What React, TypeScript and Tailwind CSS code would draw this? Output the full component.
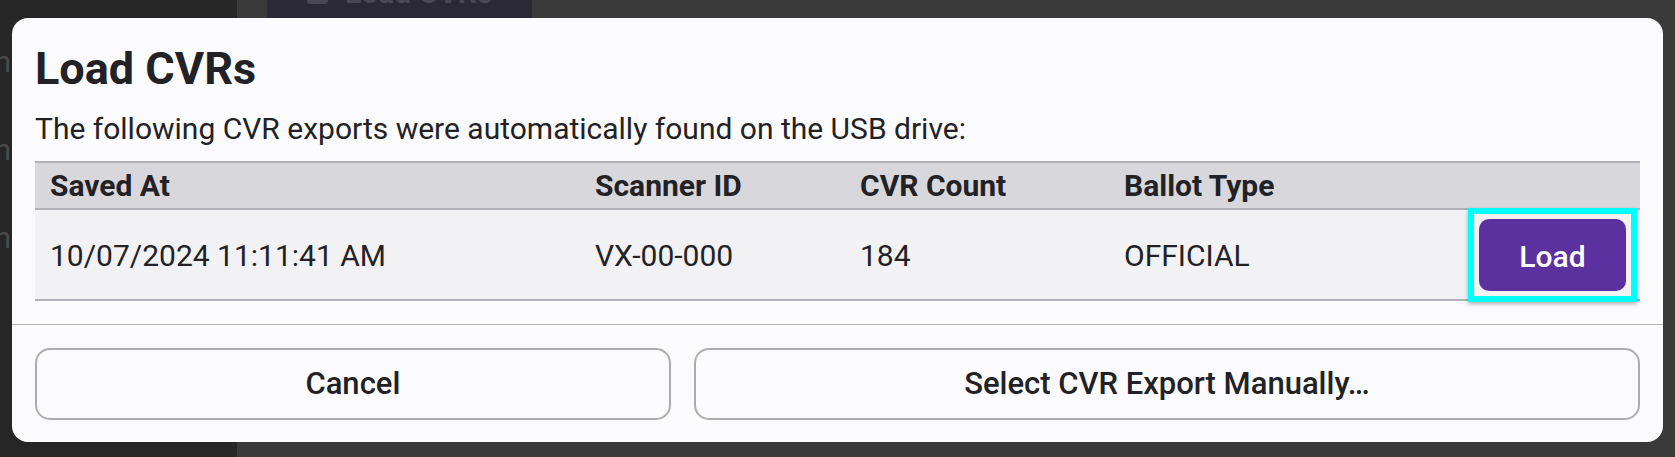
const NAV_ITEMS = ["Election", "Adjudication", "Reconciliation"];

const COLUMNS = [
  { label: "Saved At", width: "w-[545px]" },
  { label: "Scanner ID", width: "w-[265px]" },
  { label: "CVR Count", width: "w-[264px]" },
  { label: "Ballot Type", width: "w-[355px]" },
  { label: "", width: "w-[176px]" },
];

const EXPORTS = [
  {
    savedAt: "10/07/2024 11:11:41 AM",
    scannerId: "VX-00-000",
    count: 184,
    ballotType: "OFFICIAL",
  },
];

function LoadCvrsModal() {
  return (
    <div className="w-[1651px] rounded-[16px] bg-[#fbfbfd] text-[#222226]">
      <div className="border-b border-[#b5b4b9] px-[23px] pt-[24px] pb-[23px]">
        <h1 className="text-[45px] font-bold leading-[54px]">Load CVRs</h1>
        <p className="mt-[15px] text-[30px] leading-[36px]">
          The following CVR exports were automatically found on the USB drive:
        </p>
        <table className="mt-[14px] w-full table-fixed border-collapse text-[30px] leading-[36px]">
          <thead>
            <tr className="border-y-2 border-[#b1b0b6] bg-[#d8d7dc]">
              {COLUMNS.map((col, i) => (
                <th
                  key={i}
                  className={`${col.width} px-[15px] pt-[5px] pb-[4px] text-left font-bold`}
                >
                  {col.label}
                </th>
              ))}
            </tr>
          </thead>
          <tbody>
            {EXPORTS.map((row) => (
              <tr
                key={row.savedAt}
                className="border-b-2 border-[#b1b0b6] bg-[#f2f2f4]"
              >
                <td className="px-[15px] pt-[10px] pb-[7px]">{row.savedAt}</td>
                <td className="px-[15px] pt-[10px] pb-[7px]">{row.scannerId}</td>
                <td className="px-[15px] pt-[10px] pb-[7px]">{row.count}</td>
                <td className="px-[15px] pt-[10px] pb-[7px]">{row.ballotType}</td>
                <td className="pl-[15px] pr-[14px] pt-[9px] pb-[8px]">
                  <div className="flex">
                    <div className="-m-[11px] flex border-[6px] border-[#00ffff] p-[5px] shadow-[0_2px_4px_rgba(0,0,0,0.3)]">
                      <button className="h-[72px] w-[147px] rounded-[10px] bg-[#5b31a0] pt-[4px] text-[30px] font-medium text-white">
                        Load
                      </button>
                    </div>
                  </div>
                </td>
              </tr>
            ))}
          </tbody>
        </table>
      </div>
      <div className="flex gap-[23px] px-[23px] pt-[23px] pb-[22px]">
        <button className="h-[72px] flex-auto rounded-[15px] border-2 border-[#adacb2] px-[20px] text-[31px] font-medium">
          Cancel
        </button>
        <button className="h-[72px] flex-auto rounded-[15px] border-2 border-[#adacb2] px-[20px] text-[31px] font-medium">
          Select CVR Export Manually…
        </button>
      </div>
    </div>
  );
}

export default function App() {
  return (
    <div className="relative flex h-[457px] w-full overflow-hidden bg-[#3a3a3a] font-['Roboto',sans-serif]">
      <aside className="flex w-[237px] shrink-0 flex-col gap-[52px] bg-[#262626] pt-[44px]">
        {NAV_ITEMS.map((item) => (
          <div
            key={item}
            className="flex w-[11px] justify-end overflow-hidden whitespace-nowrap text-[30px] leading-[36px] text-[#4a4a4a]"
          >
            <span className="shrink-0">{item}</span>
          </div>
        ))}
      </aside>
      <main className="flex-1 pl-[30px]">
        <button className="-mt-[43px] flex w-[265px] items-center gap-[17px] rounded-[10px] bg-[#2b2837] py-[18px] pl-[40px] text-[30px] font-bold leading-[36px] text-[#4a4654]">
          <span className="h-[21px] w-[21px] rounded-[3px] bg-[#4a4654]" />
          Load CVRs
        </button>
      </main>
      <div className="absolute inset-0 flex justify-center pt-[18px]">
        <div className="self-start">
          <LoadCvrsModal />
        </div>
      </div>
    </div>
  );
}
